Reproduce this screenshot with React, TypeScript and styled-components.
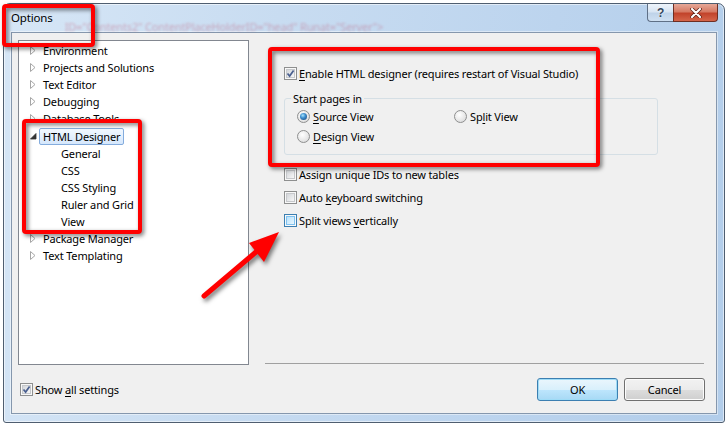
import React from "react";
import styled, { createGlobalStyle, css } from "styled-components";

const GlobalStyle = createGlobalStyle`
  html, body {
    margin: 0;
    padding: 0;
    background: #ffffff;
  }
  body {
    font-family: "Noto Sans", "Open Sans", sans-serif;
    font-size: 11px;
    letter-spacing: -0.16px;
    color: #000;
  }
`;

const Stage = styled.div`
  position: relative;
  width: 728px;
  height: 427px;
  padding: 3px 3px 4px 3px;
  box-sizing: border-box;
  background: #ffffff;
  overflow: hidden;
`;

const Window = styled.div`
  height: 100%;
  display: flex;
  flex-direction: column;
  box-sizing: border-box;
  padding: 0 7px 8px 7px;
  border: 1px solid #4f5e70;
  border-radius: 7px 7px 3px 3px;
  background: linear-gradient(100deg, #d6e6f6 0%, #c8dcf1 35%, #bcd4ee 70%, #b2cdea 100%);
  box-shadow: inset 0 0 0 1px rgba(255, 255, 255, 0.55);
`;

const TitleBar = styled.div`
  height: 28px;
  display: flex;
  align-items: flex-start;
  margin-right: -1px;
`;

const Title = styled.div`
  padding-top: 6px;
  line-height: 16px;
  font-size: 11.5px;
`;

const GhostText = styled.div`
  flex: 1;
  min-width: 0;
  overflow: hidden;
  white-space: nowrap;
  margin-left: 12px;
  padding-top: 15px;
  font-size: 11px;
  color: rgba(190, 40, 70, 0.3);
  filter: blur(0.8px);
`;

const CaptionButtons = styled.div`
  display: flex;
  margin-left: auto;
`;

const CaptionButton = styled.div<{ $close?: boolean }>`
  height: 18px;
  box-sizing: border-box;
  display: flex;
  align-items: center;
  justify-content: center;
  border: 1px solid #5f7086;
  border-top: none;
  ${(p) =>
    p.$close
      ? css`
          width: 45px;
          border-color: #6e2e22;
          border-radius: 0 0 4px 0;
          background: linear-gradient(#e6a898 0%, #d67a64 45%, #c2432b 55%, #d4654a 100%);
        `
      : css`
          width: 26px;
          border-right: none;
          border-radius: 0 0 0 4px;
          background: linear-gradient(#eef4fb 0%, #d8e5f3 45%, #bfd3e9 55%, #cfe0f2 100%);
        `}
`;

const HelpGlyph = styled.span`
  font-family: "Liberation Sans", sans-serif;
  font-weight: bold;
  font-size: 12px;
  color: #34465c;
  text-shadow: 0 0 2px #fff;
`;

const Client = styled.div`
  flex: 1;
  display: flex;
  flex-direction: column;
  background: #f0f0f0;
  border: 1px solid #8597ad;
  box-shadow: 0 0 0 1px rgba(255, 255, 255, 0.45);
`;

const Main = styled.div`
  display: flex;
  padding: 7px 12px 0 6px;
`;

const Tree = styled.div`
  width: 231px;
  height: 325px;
  box-sizing: border-box;
  border: 1px solid #828790;
  background: #ffffff;
  padding-top: 1px;
`;

const TreeRow = styled.div<{ $level: number }>`
  height: 17.1px;
  display: flex;
  align-items: center;
  padding-left: ${(p) => (p.$level === 0 ? 11 : 38)}px;
`;

const Expander = styled.span`
  width: 9px;
  height: 17px;
  display: flex;
  align-items: center;
  flex: none;
`;

const TreeLabel = styled.span<{ $selected?: boolean }>`
  height: 17px;
  line-height: 15px;
  box-sizing: border-box;
  padding: 0 3px;
  border: 1px solid transparent;
  border-radius: 2px;
  white-space: nowrap;
  ${(p) =>
    p.$selected &&
    css`
      border-color: #84acdd;
      background: linear-gradient(#f2f8fe, #d5e7fc);
    `}
`;

const RightPane = styled.div`
  flex: 1;
  height: 324px;
  margin-left: 16px;
  box-sizing: border-box;
  border-bottom: 1px solid #a0a0a0;
  padding: 25px 0 0 19px;
  display: flex;
  flex-direction: column;
  align-items: flex-start;
`;

const OptionRow = styled.label<{ $gap?: number }>`
  height: 17px;
  display: flex;
  align-items: center;
  gap: ${(p) => p.$gap ?? 2}px;
  line-height: 17px;
  white-space: nowrap;
`;

const OptionList = styled.div`
  display: flex;
  flex-direction: column;
  gap: 6px;
  margin-top: 11px;
`;

const GroupBox = styled.fieldset`
  width: 374px;
  box-sizing: border-box;
  margin: 8px 0 0 0;
  padding: 1px 0 9px 12px;
  min-width: 0;
  border: 1px solid #d5dfe5;
  border-radius: 3px;
  display: grid;
  grid-template-columns: 157px 1fr;
  row-gap: 3px;
`;

const Legend = styled.legend`
  padding: 0 2px;
  margin-left: -6px;
  line-height: 17px;
`;

const CheckBox = styled.span<{ $hot?: boolean }>`
  position: relative;
  width: 13px;
  height: 13px;
  flex: none;
  box-sizing: border-box;
  border: 1px solid ${(p) => (p.$hot ? "#3c7fb1" : "#8e8f8f")};
  background: #f8f8f8;
  &::before {
    content: "";
    position: absolute;
    inset: 1px;
    border: 1px solid ${(p) => (p.$hot ? "#7fc2f0" : "#c6c8cb")};
    background: ${(p) =>
      p.$hot
        ? "linear-gradient(135deg, #b9e2fc, #e9f7fe)"
        : "linear-gradient(135deg, #d3d6da, #f7f7f7)"};
  }
  svg {
    position: absolute;
    left: 1px;
    top: 1px;
  }
`;

const RadioDot = styled.span<{ $on?: boolean }>`
  position: relative;
  width: 13px;
  height: 13px;
  flex: none;
  box-sizing: border-box;
  border-radius: 50%;
  border: 1px solid #8e8f8f;
  background: radial-gradient(circle at 40% 35%, #ffffff 0%, #e6e6e6 60%, #cfd1d4 100%);
  ${(p) =>
    p.$on &&
    css`
      &::after {
        content: "";
        position: absolute;
        inset: 2px;
        border-radius: 50%;
        background: radial-gradient(circle at 40% 35%, #a8e4fb 0%, #3e8fd0 40%, #173f6e 100%);
      }
    `}
`;

const Accel = styled.span`
  text-decoration: underline;
  text-underline-offset: 2px;
`;

const Footer = styled.div`
  flex: 1;
  display: flex;
  align-items: center;
  padding: 0 11px 0 8px;
`;

const Buttons = styled.div`
  display: flex;
  gap: 6px;
  margin-left: auto;
`;

const Button = styled.button<{ $default?: boolean }>`
  width: 81px;
  height: 23px;
  box-sizing: border-box;
  font: inherit;
  letter-spacing: inherit;
  color: #000;
  border-radius: 3px;
  padding: 0;
  border: 1px solid ${(p) => (p.$default ? "#3c7fb1" : "#707070")};
  background: ${(p) =>
    p.$default
      ? "linear-gradient(#eaf6fd 0%, #d9f0fc 50%, #bee6fd 50%, #a7d9f5 100%)"
      : "linear-gradient(#f2f2f2 0%, #ebebeb 50%, #dddddd 50%, #cfcfcf 100%)"};
  box-shadow: inset 0 0 0 1px ${(p) => (p.$default ? "#9fdcf7" : "#fcfcfc")};
`;

const Callout = styled.div<{ $x: number; $y: number; $w: number; $h: number }>`
  position: absolute;
  left: ${(p) => p.$x}px;
  top: ${(p) => p.$y}px;
  width: ${(p) => p.$w}px;
  height: ${(p) => p.$h}px;
  box-sizing: border-box;
  border: 4px solid #ff0000;
  border-radius: 4px;
  filter: drop-shadow(2px 2px 2px rgba(0, 0, 0, 0.55));
  pointer-events: none;
`;

const ArrowSvg = styled.svg`
  position: absolute;
  left: 190px;
  top: 220px;
  filter: drop-shadow(2px 3px 2px rgba(0, 0, 0, 0.5));
  pointer-events: none;
`;

const Check = () => (
  <svg width="9" height="9" viewBox="0 0 9 9">
    <path d="M1.5 4.5 L3.6 7 L7.6 1.4" fill="none" stroke="#4a5f8f" strokeWidth="1.7" />
  </svg>
);

const Collapsed = () => (
  <svg width="6" height="9" viewBox="0 0 6 9">
    <path d="M0.5 0.5 L5 4.5 L0.5 8.5 Z" fill="#fff" stroke="#a6a6a6" strokeWidth="1" />
  </svg>
);

const Expanded = () => (
  <svg width="7" height="7" viewBox="0 0 7 7">
    <path d="M6 0.5 L6 6 L0.5 6 Z" fill="#333" stroke="#333" strokeWidth="0.8" />
  </svg>
);

type Node = { label: string; level: number; state?: "open" | "closed"; selected?: boolean };

const nodes: Node[] = [
  { label: "Environment", level: 0, state: "closed" },
  { label: "Projects and Solutions", level: 0, state: "closed" },
  { label: "Text Editor", level: 0, state: "closed" },
  { label: "Debugging", level: 0, state: "closed" },
  { label: "Database Tools", level: 0, state: "closed" },
  { label: "HTML Designer", level: 0, state: "open", selected: true },
  { label: "General", level: 1 },
  { label: "CSS", level: 1 },
  { label: "CSS Styling", level: 1 },
  { label: "Ruler and Grid", level: 1 },
  { label: "View", level: 1 },
  { label: "Package Manager", level: 0, state: "closed" },
  { label: "Text Templating", level: 0, state: "closed" },
];

export default function App() {
  return (
    <>
      <GlobalStyle />
      <Stage>
        <Window>
          <TitleBar>
            <Title>Options</Title>
            <GhostText>
              ID="Contents2" ContentPlaceHolderID="head" Runat="Server"&gt;
            </GhostText>
            <CaptionButtons>
              <CaptionButton>
                <HelpGlyph>?</HelpGlyph>
              </CaptionButton>
              <CaptionButton $close>
                <svg width="12" height="10" viewBox="0 0 12 10">
                  <path d="M2 1 L10 9 M10 1 L2 9" stroke="#5a1e14" strokeWidth="3.6" strokeLinecap="round" />
                  <path d="M2 1 L10 9 M10 1 L2 9" stroke="#ffffff" strokeWidth="2.2" strokeLinecap="round" />
                </svg>
              </CaptionButton>
            </CaptionButtons>
          </TitleBar>

          <Client>
            <Main>
              <Tree>
                {nodes.map((n) => (
                  <TreeRow key={n.label} $level={n.level}>
                    {n.level === 0 && (
                      <Expander>{n.state === "open" ? <Expanded /> : <Collapsed />}</Expander>
                    )}
                    <TreeLabel $selected={n.selected}>{n.label}</TreeLabel>
                  </TreeRow>
                ))}
              </Tree>

              <RightPane>
                <OptionRow>
                  <CheckBox>
                    <Check />
                  </CheckBox>
                  <span>
                    <Accel>E</Accel>nable HTML designer (requires restart of Visual Studio)
                  </span>
                </OptionRow>

                <GroupBox>
                  <Legend>Start pages in</Legend>
                  <OptionRow $gap={3}>
                    <RadioDot $on />
                    <span>
                      <Accel>S</Accel>ource View
                    </span>
                  </OptionRow>
                  <OptionRow $gap={3}>
                    <RadioDot />
                    <span>
                      Sp<Accel>l</Accel>it View
                    </span>
                  </OptionRow>
                  <OptionRow $gap={3}>
                    <RadioDot />
                    <span>
                      <Accel>D</Accel>esign View
                    </span>
                  </OptionRow>
                </GroupBox>

                <OptionList>
                  <OptionRow>
                    <CheckBox />
                    <span>Assign unique IDs to new tables</span>
                  </OptionRow>
                  <OptionRow>
                    <CheckBox />
                    <span>
                      Auto <Accel>k</Accel>eyboard switching
                    </span>
                  </OptionRow>
                  <OptionRow>
                    <CheckBox $hot />
                    <span>
                      Split views <Accel>v</Accel>ertically
                    </span>
                  </OptionRow>
                </OptionList>
              </RightPane>
            </Main>

            <Footer>
              <OptionRow>
                <CheckBox>
                  <Check />
                </CheckBox>
                <span>
                  Show <Accel>a</Accel>ll settings
                </span>
              </OptionRow>
              <Buttons>
                <Button $default>OK</Button>
                <Button>Cancel</Button>
              </Buttons>
            </Footer>
          </Client>
        </Window>

        <Callout $x={2} $y={4} $w={93} $h={43} />
        <Callout $x={22} $y={119} $w={120} $h={115} />
        <Callout $x={268} $y={47} $w={332} $h={120} />

        <ArrowSvg width="100" height="90" viewBox="0 0 100 90">
          <path d="M14 76 L66 32" stroke="#ff0000" strokeWidth="5" strokeLinecap="round" />
          <path d="M89 12 L59 23 L74 42 Z" fill="#ff0000" />
        </ArrowSvg>
      </Stage>
    </>
  );
}
